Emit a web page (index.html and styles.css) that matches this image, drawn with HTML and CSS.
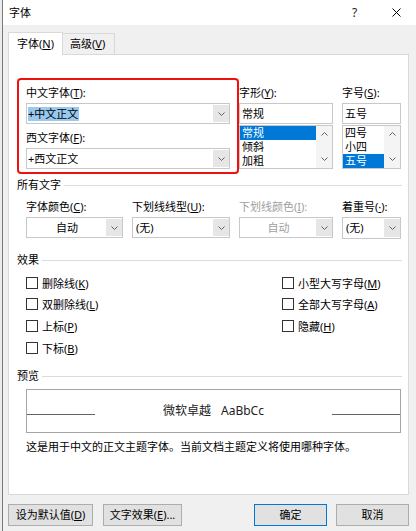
FILE: index.html
```html
<!DOCTYPE html>
<html lang="zh-CN">
<head>
<meta charset="utf-8">
<title>字体</title>
<link rel="stylesheet" href="styles.css">
</head>
<body>
<div class="window">
  <div class="titlebar">
    <span class="title">字体</span>
    <span class="help">?</span>
    <svg class="close" width="9" height="9" viewBox="0 0 9 9"><path d="M0.5 0.5L8.5 8.5M8.5 0.5L0.5 8.5" stroke="#000" stroke-width="1" fill="none"/></svg>
  </div>

  <div class="tabs">
    <div class="tab active">字体(<u>N</u>)</div>
    <div class="tab">高级(<u>V</u>)</div>
  </div>

  <div class="panel">
    <div class="fontsec">
      <div class="col col1">
        <span class="lbl">中文字体(<u>T</u>):</span>
        <div class="combo"><div class="val"><span class="hl">+中文正文</span></div><div class="btn"><svg width="7" height="4" viewBox="0 0 7 4"><path d="M0.5 0.5L3.5 3.5L6.5 0.5" fill="none" stroke="#606060"/></svg></div></div>
        <span class="lbl lbl2">西文字体(<u>F</u>):</span>
        <div class="combo"><div class="val">+西文正文</div><div class="btn"><svg width="7" height="4" viewBox="0 0 7 4"><path d="M0.5 0.5L3.5 3.5L6.5 0.5" fill="none" stroke="#606060"/></svg></div></div>
      </div>
      <div class="col col2">
        <span class="lbl">字形(<u>Y</u>):</span>
        <div class="input">常规</div>
        <div class="list">
          <div class="items">
            <div class="item sel">常规</div>
            <div class="item">倾斜</div>
            <div class="item">加粗</div>
          </div>
          <div class="sb">
            <svg width="7" height="4" viewBox="0 0 7 4"><path d="M0.5 3.5L3.5 0.5L6.5 3.5" fill="none" stroke="#606060"/></svg>
            <svg width="7" height="4" viewBox="0 0 7 4"><path d="M0.5 0.5L3.5 3.5L6.5 0.5" fill="none" stroke="#606060"/></svg>
          </div>
        </div>
      </div>
      <div class="col col3">
        <span class="lbl">字号(<u>S</u>):</span>
        <div class="input">五号</div>
        <div class="list">
          <div class="items">
            <div class="item">四号</div>
            <div class="item">小四</div>
            <div class="item sel">五号</div>
          </div>
          <div class="sb">
            <svg width="7" height="4" viewBox="0 0 7 4"><path d="M0.5 3.5L3.5 0.5L6.5 3.5" fill="none" stroke="#606060"/></svg>
            <svg width="7" height="4" viewBox="0 0 7 4"><path d="M0.5 0.5L3.5 3.5L6.5 0.5" fill="none" stroke="#606060"/></svg>
          </div>
        </div>
      </div>
      <div class="redbox"></div>
    </div>

    <div class="sechead sh-all">所有文字</div>
    <div class="row4">
      <div class="cell">
        <span class="lbl">字体颜色(<u>C</u>):</span>
        <div class="combo"><div class="val center">自动</div><div class="btn"><svg width="7" height="4" viewBox="0 0 7 4"><path d="M0.5 0.5L3.5 3.5L6.5 0.5" fill="none" stroke="#606060"/></svg></div></div>
      </div>
      <div class="cell">
        <span class="lbl">下划线线型(<u>U</u>):</span>
        <div class="combo"><div class="val pad">(无)</div><div class="btn"><svg width="7" height="4" viewBox="0 0 7 4"><path d="M0.5 0.5L3.5 3.5L6.5 0.5" fill="none" stroke="#606060"/></svg></div></div>
      </div>
      <div class="cell disabled">
        <span class="lbl">下划线颜色(<u>I</u>):</span>
        <div class="combo"><div class="val center">自动</div><div class="btn"><svg width="7" height="4" viewBox="0 0 7 4"><path d="M0.5 0.5L3.5 3.5L6.5 0.5" fill="none" stroke="#606060"/></svg></div></div>
      </div>
      <div class="cell">
        <span class="lbl">着重号(<u>·</u>):</span>
        <div class="combo tall"><div class="val pad">(无)</div><div class="btn"><svg width="7" height="4" viewBox="0 0 7 4"><path d="M0.5 0.5L3.5 3.5L6.5 0.5" fill="none" stroke="#606060"/></svg></div></div>
      </div>
    </div>

    <div class="sechead sh-eff">效果</div>
    <div class="checks">
      <label class="chk"><span class="box"></span><span>删除线(<u>K</u>)</span></label>
      <label class="chk"><span class="box"></span><span>小型大写字母(<u>M</u>)</span></label>
      <label class="chk"><span class="box"></span><span>双删除线(<u>L</u>)</span></label>
      <label class="chk"><span class="box"></span><span>全部大写字母(<u>A</u>)</span></label>
      <label class="chk"><span class="box"></span><span>上标(<u>P</u>)</span></label>
      <label class="chk"><span class="box"></span><span>隐藏(<u>H</u>)</span></label>
      <label class="chk"><span class="box"></span><span>下标(<u>B</u>)</span></label>
    </div>

    <div class="sechead sh-prev">预览</div>
    <div class="preview">
      <div class="pl"></div>
      <div class="pt"><span>微软卓越</span><span class="latin">AaBbCc</span></div>
      <div class="pl"></div>
    </div>
    <div class="desc">这是用于中文的正文主题字体。当前文档主题定义将使用哪种字体。</div>
  </div>

  <div class="buttons">
    <div class="b b1">设为默认值(<u>D</u>)</div>
    <div class="b b2">文字效果(<u>E</u>)...</div>
    <div class="b b3">确定</div>
    <div class="b b4">取消</div>
  </div>
</div>
</body>
</html>
```

FILE: styles.css
```css
* { box-sizing: border-box; }
html, body { margin: 0; padding: 0; }
body {
  width: 416px;
  height: 531px;
  overflow: hidden;
  background: #ececec;
  font-family: "Noto Sans", "Noto Sans CJK SC", sans-serif;
  font-size: 11px;
  color: #000;
}
u { text-decoration: underline; text-underline-offset: 1px; }

.window {
  margin-left: 2px;
  width: 414px;
  height: 531px;
  border-left: 1px solid #7a7a7a;
  background: #f0f0f0;
  display: flex;
  flex-direction: column;
}

.titlebar {
  height: 25px;
  flex: none;
  background: #fff;
  display: flex;
  align-items: center;
  padding-left: 6px;
}
.title { flex: 1; line-height: 16px; }
.help { font-size: 12px; line-height: 16px; width: 6px; margin-right: 34px; color: #222; }
.close { margin-right: 15px; display: block; }

.tabs {
  display: flex;
  margin: 7px 0 0 5px;
  height: 22px;
  flex: none;
}
.tab {
  margin-top: 1px;
  height: 21px;
  width: 52px;
  border: 1px solid #d9d9d9;
  border-left: 0;
  border-bottom: 0;
  background: #f0f0f0;
  padding-left: 7px;
  line-height: 19px;
  white-space: nowrap;
}
.tab.active {
  margin-top: 0;
  height: 23px;
  width: 55px;
  border-left: 1px solid #d9d9d9;
  background: #fff;
  padding-left: 8px;
  line-height: 21px;
  position: relative;
  z-index: 1;
}

.panel {
  margin-left: 5px;
  width: 401px;
  height: 441px;
  flex: none;
  background: #fff;
  border: 1px solid #d9d9d9;
  padding: 30px 6px 0 8px;
}

.lbl { display: block; height: 16px; line-height: 16px; margin-bottom: 2px; white-space: nowrap; }

.fontsec {
  position: relative;
  display: flex;
  gap: 9px;
  padding-left: 9px;
}
.col1 { width: 204px; }
.col2 { width: 94px; }
.col3 { width: 59px; }
.lbl2 { margin-top: 6px; }
.redbox {
  position: absolute;
  left: 0;
  top: -7px;
  width: 222px;
  height: 96px;
  border: 2px solid #f01010;
  border-radius: 4px;
}

.combo {
  height: 21px;
  border: 1px solid #c8c8c8;
  background: #fff;
  display: flex;
}
.combo.tall { height: 22px; }
.combo .val {
  flex: 1;
  padding-left: 1px;
  line-height: 19px;
  white-space: nowrap;
  overflow: hidden;
}
.combo .val.center { text-align: center; }
.combo .val.pad { padding-left: 3px; }
.combo .btn {
  width: 16px;
  margin: 1px 0;
  background: #e6e6e6;
  display: flex;
  align-items: center;
  justify-content: center;
}
.combo .btn svg { display: block; }
.hl {
  display: inline-block;
  background: #99c9ef;
  line-height: 14px;
  padding-right: 1px;
}

.input {
  height: 21px;
  border: 1px solid #c8c8c8;
  padding-left: 2px;
  line-height: 19px;
}
.list {
  height: 44px;
  margin-top: 1px;
  border: 1px solid #c8c8c8;
  display: flex;
}
.items { flex: 1; }
.item { height: 14px; line-height: 14px; padding-left: 2px; overflow: hidden; }
.item.sel { background: #0078d7; color: #fff; }
.sb {
  width: 16px;
  background: #f4f4f4;
  display: flex;
  flex-direction: column;
  justify-content: space-between;
  align-items: center;
  padding: 6px 0 7px;
}
.sb svg { display: block; }

.sechead {
  display: flex;
  align-items: center;
  height: 16px;
  line-height: 16px;
  white-space: nowrap;
}
.sechead::after {
  content: "";
  flex: 1;
  border-top: 1px solid #dcdcdc;
  margin-left: 3px;
  margin-top: 1px;
}
.sh-all { margin-top: 8px; }
.sh-eff { margin-top: 13px; }
.sh-prev { margin-top: 9px; }

.row4 {
  display: grid;
  grid-template-columns: 97px 98px 94px 59px;
  column-gap: 9px;
  padding-left: 9px;
  margin-top: 6px;
}
.disabled { color: #a0a0a0; }

.checks {
  display: grid;
  grid-template-columns: 256px 1fr;
  grid-auto-rows: 21.67px;
  padding-left: 9px;
  margin-top: 4px;
}
.chk { display: flex; align-items: center; gap: 4px; white-space: nowrap; }
.box { width: 12px; height: 12px; border: 1px solid #333; background: #fff; flex: none; }

.preview {
  margin: 5px 1px 0 9px;
  height: 44px;
  border: 1px solid #a5a5a5;
  display: flex;
}
.pl { width: 68px; height: 1px; background: #646464; margin-top: 24px; }
.pt {
  flex: 1;
  text-align: center;
  font-size: 12px;
  line-height: 16px;
  margin-top: 13px;
  color: #222;
}
.pt .latin { margin-left: 10px; }
.desc { padding-left: 9px; margin-top: 6px; line-height: 16px; white-space: nowrap; }

.buttons {
  display: flex;
  margin-top: 9px;
  padding-left: 5px;
}
.b {
  height: 22px;
  border: 1px solid #adadad;
  background: #e1e1e1;
  text-align: center;
  line-height: 20px;
  white-space: nowrap;
}
.b1 { width: 85px; }
.b2 { width: 79px; margin-left: 10px; }
.b3 { width: 73px; margin-left: auto; border-color: #0078d7; }
.b4 { width: 73px; margin-left: 9px; margin-right: 7px; }
```
